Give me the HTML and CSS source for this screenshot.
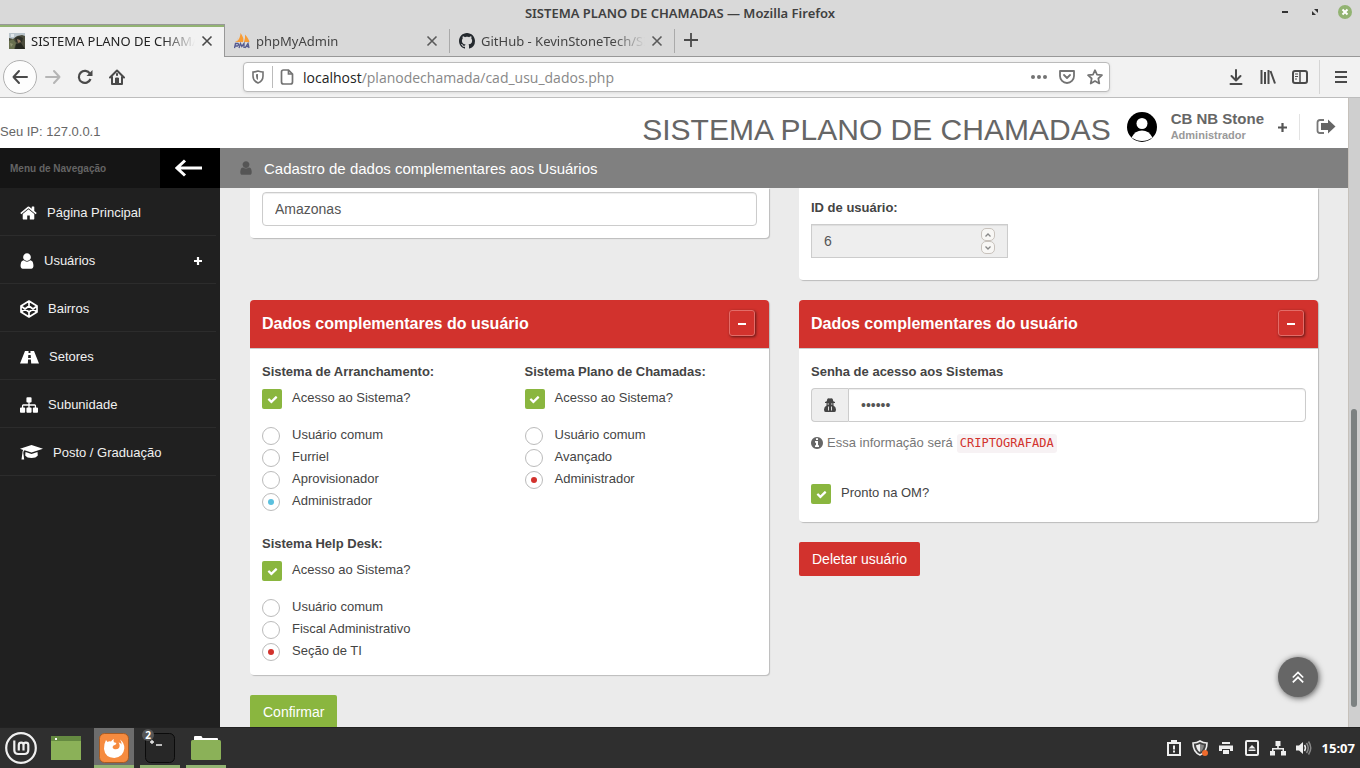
FILE: index.html
```html
<!DOCTYPE html>
<html lang="pt-BR">
<head>
<meta charset="utf-8">
<title>SISTEMA PLANO DE CHAMADAS</title>
<link rel="stylesheet" href="styles.css">
</head>
<body>
<div class="titlebar">
  <span class="titlebar-text">SISTEMA PLANO DE CHAMADAS — Mozilla Firefox</span>
  <div class="window-controls">
    <button class="plain" aria-label="Minimizar"><svg width="14" height="14" viewBox="0 0 14 14"><path d="M4 7h6" stroke="#333" stroke-width="2"/></svg></button>
    <button class="plain" aria-label="Restaurar"><svg width="14" height="14" viewBox="0 0 14 14"><path d="M6 4h4v4zM4 6v4h4z" fill="#333"/></svg></button>
    <button class="plain" aria-label="Fechar janela"><svg width="14" height="14" viewBox="0 0 14 14"><circle cx="7" cy="7" r="7" fill="#92b372"/><path d="M4.500 4.500l5 5M9.500 4.500l-5 5" stroke="#fff" stroke-width="2"/></svg></button>
  </div>
</div>

<div class="tabs">
  <div class="tab tab-active">
    <svg width="16" height="16" viewBox="0 0 16 16"><rect width="16" height="16" fill="#4b4c3c"/><path d="M0 0h16v3l-3-1-5 1-4 3-4-1z" fill="#b9c4cb"/><path d="M2 1h3v3H2z" fill="#e0e6e9"/><path d="M6 5l4-2 4 2-1 4-3 1-3-1z" fill="#2d2f26"/><path d="M8 6l3 1 1 2-3 1z" fill="#977961"/><path d="M0 8l4-2 3 4-2 6H0z" fill="#69704f"/><path d="M7 11l5-1 4 6H6z" fill="#25271f"/><path d="M1 10l3 1-2 3z" fill="#929472"/></svg>
    <span class="tab-label">SISTEMA PLANO DE CHAMADAS</span>
    <button class="plain" aria-label="Fechar aba"><svg width="12" height="12" viewBox="0 0 12 12"><path d="M1.500 1.500l9 9M10.500 1.500l-9 9" stroke="#4a4a4a" stroke-width="1.600"/></svg></button>
  </div>
  <div class="tab">
    <svg width="16" height="16" viewBox="0 0 16 16"><path d="M6.500 0q4 5 2.500 9H2.500q4-4 4-9zM11 1.500q4 4.500 4.500 7.500H10q1.500-4 1-7.500zM4 4.500Q4 8 1 9h2z" fill="#f89c35"/><path d="M.5 15l1-4.500h2.500q1.500 1-.5 2.500H1.500M5 15l1.500-4.500 1.300 3 2.200-3V15M11 15l3-4.500 1 4.500M12.500 13.500h2.500" fill="none" stroke="#555a90" stroke-width="1.300"/></svg>
    <span class="tab-label">phpMyAdmin</span>
    <button class="plain" aria-label="Fechar aba"><svg width="12" height="12" viewBox="0 0 12 12"><path d="M1.500 1.500l9 9M10.500 1.500l-9 9" stroke="#5a5a5a" stroke-width="1.600"/></svg></button>
  </div>
  <div class="tab">
    <svg width="16" height="16" viewBox="0 0 16 16"><path fill="#24292e" d="M8 0C3.580 0 0 3.580 0 8c0 3.540 2.290 6.530 5.470 7.590.4.070.55-.17.55-.38 0-.19-.01-.82-.01-1.490-2.010.37-2.530-.49-2.690-.94-.09-.23-.48-.94-.82-1.130-.28-.15-.68-.52-.01-.53.630-.01 1.080.58 1.230.82.720 1.210 1.870.87 2.330.66.070-.52.280-.87.510-1.070-1.780-.2-3.640-.89-3.640-3.950 0-.87.310-1.590.82-2.150-.08-.2-.36-1.020.08-2.120 0 0 .67-.21 2.200.82.640-.18 1.320-.27 2-.27s1.360.09 2 .27c1.530-1.040 2.200-.82 2.200-.82.440 1.100.160 1.920.080 2.120.51.560.82 1.270.82 2.150 0 3.070-1.870 3.750-3.650 3.950.29.250.54.730.54 1.480 0 1.070-.01 1.930-.01 2.200 0 .21.150.46.550.38A8.010 8.010 0 0 0 16 8c0-4.420-3.580-8-8-8z"/></svg>
    <span class="tab-label">GitHub - KevinStoneTech/SISTEMA</span>
    <button class="plain" aria-label="Fechar aba"><svg width="12" height="12" viewBox="0 0 12 12"><path d="M1.500 1.500l9 9M10.500 1.500l-9 9" stroke="#5a5a5a" stroke-width="1.600"/></svg></button>
  </div>
  <button class="plain new-tab" aria-label="Nova aba"><svg width="14" height="14" viewBox="0 0 14 14"><path d="M7 0v14M0 7h14" stroke="#4a4a4a" stroke-width="1.800"/></svg></button>
</div>

<div class="toolbar">
  <button class="plain back" aria-label="Voltar"><svg width="16" height="16" viewBox="0 0 16 16" fill="none" stroke="#4a4a4a" stroke-width="2" stroke-linecap="round" stroke-linejoin="round"><path d="M15 8H1.500M7 2L1.500 8 7 14"/></svg></button>
  <button class="plain nav-icon" aria-label="Avançar"><svg width="16" height="16" viewBox="0 0 16 16" fill="none" stroke="#b5b5b5" stroke-width="2" stroke-linecap="round" stroke-linejoin="round"><path d="M1 8h13.500M9 2l5.500 6L9 14"/></svg></button>
  <button class="plain nav-icon" aria-label="Recarregar"><svg width="16" height="16" viewBox="0 0 16 16"><path d="M13.500 10A6 6 0 1 1 13 4.800" fill="none" stroke="#4a4a4a" stroke-width="2.200"/><path d="M15.500 1v6H9.500z" fill="#4a4a4a"/></svg></button>
  <button class="plain nav-icon" aria-label="Página inicial"><svg width="16" height="16" viewBox="0 0 16 16"><path d="M1 8.500L8 1.500l7 7M3 7.500V15h10V7.500" fill="none" stroke="#4a4a4a" stroke-width="2" stroke-linejoin="round" stroke-linecap="round"/><path d="M6.500 14V9h3v5M7.500 4.500h1v2h-1z" stroke="#4a4a4a" fill="#4a4a4a"/></svg></button>
  <div class="spacer"></div>
  <div class="urlbar">
    <svg width="14" height="14" viewBox="0 0 14 14"><path d="M7 1q3 1 5 1v4q0 5-5 7-5-2-5-7V2q2 0 5-1z" fill="none" stroke="#737373" stroke-width="1.600"/><path d="M7 4v6q-2-1-2-4V4.300z" fill="#737373"/></svg>
    <span class="url-sep"></span>
    <svg width="14" height="16" viewBox="0 0 14 16"><path d="M1.500 3q0-2 2-2h5l4 4v8q0 2-2 2h-7q-2 0-2-2zM8.500 1v4h4" fill="none" stroke="#737373" stroke-width="1.700"/></svg>
    <div class="url"><span class="url-host">localhost</span>/planodechamada/cad_usu_dados.php</div>
    <div class="url-actions">
      <button class="plain" aria-label="Ações"><svg width="16" height="16" viewBox="0 0 16 16" fill="#737373"><circle cx="2" cy="8" r="2"/><circle cx="8" cy="8" r="2"/><circle cx="14" cy="8" r="2"/></svg></button>
      <button class="plain" aria-label="Pocket"><svg width="16" height="16" viewBox="0 0 16 16" fill="none" stroke="#737373" stroke-width="1.800" stroke-linecap="round"><path d="M1 2h14v5a7 7 0 0 1-14 0zM5 6l3 3 3-3" stroke-linejoin="round"/></svg></button>
      <button class="plain" aria-label="Favoritar"><svg width="16" height="16" viewBox="0 0 16 16"><path d="M8 1.200l2 4.500 5 .5-3.700 3.300 1 5L8 12l-4.300 2.500 1-5L1 6.200l5-.5z" fill="none" stroke="#737373" stroke-width="1.700" stroke-linejoin="round"/></svg></button>
    </div>
  </div>
  <div class="spacer"></div>
  <button class="plain nav-icon" aria-label="Downloads"><svg width="16" height="16" viewBox="0 0 16 16" fill="none" stroke="#4a4a4a" stroke-width="2" stroke-linecap="round" stroke-linejoin="round"><path d="M8 1v10M3.500 7L8 11.500 12.500 7M2.500 15h11"/></svg></button>
  <button class="plain nav-icon" aria-label="Biblioteca"><svg width="16" height="16" viewBox="0 0 16 16" stroke="#4a4a4a" stroke-width="2"><path d="M1.500 1v14M5 3v12M8.500 1v14M10.500 2l4.500 12.500"/></svg></button>
  <button class="plain nav-icon" aria-label="Painel lateral"><svg width="16" height="16" viewBox="0 0 16 16" fill="none" stroke="#4a4a4a"><rect x="1" y="2" width="14" height="12" rx="2" stroke-width="2"/><path d="M8 2v12" stroke-width="1.500"/><path d="M3 5h3M3 7.500h3M3 10h2"/></svg></button>
  <span class="toolbar-sep"></span>
  <button class="plain menu" aria-label="Menu"><svg width="14" height="14" viewBox="0 0 14 14"><path d="M1 2h12M1 7h12M1 12h12" stroke="#4a4a4a" stroke-width="2"/></svg></button>
</div>

<div class="viewport">
  <div class="page">
    <header class="page-header">
      <span class="ip">Seu IP: 127.0.0.1</span>
      <h1 class="brand">SISTEMA PLANO DE CHAMADAS</h1>
      <svg class="avatar" width="30" height="30" viewBox="0 0 30 30"><circle cx="15" cy="15" r="15" fill="#000"/><circle cx="15" cy="11.500" r="5.500" fill="#fff"/><path d="M4.500 25.500Q8 18.500 15 18.500t10.500 7Q20 29 15 29T4.500 25.500z" fill="#fff"/></svg>
      <div class="account"><strong class="account-name">CB NB Stone</strong><span class="account-role">Administrador</span></div>
      <button class="plain account-more" aria-label="Mais opções"><svg width="9" height="9" viewBox="0 0 9 9"><path d="M4.500 0v9M0 4.500h9" stroke="#555" stroke-width="2.200"/></svg></button>
      <a class="logout" href="#" aria-label="Sair"><svg width="20" height="18" viewBox="0 0 20 18"><path d="M8 2H4Q1.500 2 1.500 4.500v8Q1.500 15 4 15h4" fill="none" stroke="#777" stroke-width="1.800"/><path d="M5 5h7V1.500l7.500 7-7.500 7V12H5z" fill="#666"/></svg></a>
    </header>
    <div class="page-body">
      <nav class="sidebar">
        <div class="sidebar-head"><span class="sidebar-title">Menu de Navegação</span>
          <button class="plain collapse" aria-label="Recolher menu"><svg width="28" height="18" viewBox="0 0 28 18" fill="none" stroke="#fff" stroke-width="3"><path d="M2 9h25M10 1.500L2 9l8 7.500"/></svg></button>
        </div>
        <a class="nav-item" href="#"><svg width="17" height="18" viewBox="64 0 1664 1792"><path fill="#fff" d="M1472 992v480q0 26-19 45t-45 19h-384v-384h-256v384h-384q-26 0-45-19t-19-45v-480q0-1 .5-3t.5-3l575-474 575 474q1 2 1 6zm223-69l-62 74q-8 9-21 11h-3q-13 0-21-7l-692-577-692 577q-12 8-24 7-13-2-21-11l-62-74q-8-10-7-23.500t11-21.500l719-599q32-26 76-26t76 26l244 204v-195q0-14 9-23t23-9h192q14 0 23 9t9 23v408l219 182q10 8 11 21.500t-7 23.500z"/></svg>Página Principal</a>
        <a class="nav-item" href="#"><svg width="14" height="18" viewBox="256 0 1280 1792"><path fill="#fff" d="M1536 1399q0 109-62.500 187t-150.500 78h-854q-88 0-150.500-78t-62.500-187q0-85 8.500-160.500t31.500-152 58.500-131 94-89 134.500-34.500q131 128 313 128t313-128q76 0 134.500 34.500t94 89 58.500 131 31.500 152 8.500 160.500zm-256-887q0 159-112.500 271.500t-271.500 112.500-271.500-112.500-112.500-271.500 112.500-271.500 271.500-112.500 271.500 112.500 112.500 271.500z"/></svg>Usuários<svg class="nav-plus" width="8" height="8" viewBox="0 0 8 8"><path d="M4 0v8M0 4h8" stroke="#fff" stroke-width="2.200"/></svg></a>
        <a class="nav-item" href="#"><svg width="18" height="18" viewBox="0 0 18 18" fill="none" stroke="#fff" stroke-width="1.700" stroke-linejoin="round"><path d="M9 1l8 5v6l-8 5-8-5V6zM1 6l8 6 8-6M1 12l8-6 8 6M9 1v5M9 12v5"/></svg>Bairros</a>
        <a class="nav-item" href="#"><svg width="19" height="14" viewBox="0 0 19 14"><path fill="#fff" fill-rule="evenodd" d="M5 1h3.600l-.1 2h2l-.1-2H14l5 12.500h-7.800l-.3-4H8.100l-.3 4H0zM8.300 5l-.2 3h2.800l-.2-3z"/></svg>Setores</a>
        <a class="nav-item" href="#"><svg width="18" height="18" viewBox="0 0 1792 1792"><path fill="#fff" d="M1792 1248v320q0 40-28 68t-68 28h-320q-40 0-68-28t-28-68v-320q0-40 28-68t68-28h96v-192h-512v192h96q40 0 68 28t28 68v320q0 40-28 68t-68 28h-320q-40 0-68-28t-28-68v-320q0-40 28-68t68-28h96v-192h-512v192h96q40 0 68 28t28 68v320q0 40-28 68t-68 28h-320q-40 0-68-28t-28-68v-320q0-40 28-68t68-28h96v-192q0-52 38-90t90-38h512v-192h-96q-40 0-68-28t-28-68v-320q0-40 28-68t68-28h320q40 0 68 28t28 68v320q0 40-28 68t-68 28h-96v192h512q52 0 90 38t38 90v192h96q40 0 68 28t28 68z"/></svg>Subunidade</a>
        <a class="nav-item" href="#"><svg width="23" height="17" viewBox="0 0 23 17" fill="#fff"><path d="M11.500 1L23 4.800 11.500 8.600 4.500 6.300Q3.400 7 3.300 9l.9 6.500H1.500L2.400 9q0-2 .8-3.100L0 4.800z"/><path d="M5.500 8l6 2 6-2 .3 3.500Q16 14 11.500 14T5.200 11.500z"/></svg>Posto / Graduação</a>
      </nav>
      <div class="content">
        <div class="crumb"><svg width="12" height="16" viewBox="256 0 1280 1792"><path fill="#555" d="M1536 1399q0 109-62.500 187t-150.500 78h-854q-88 0-150.500-78t-62.500-187q0-85 8.500-160.500t31.500-152 58.500-131 94-89 134.500-34.500q131 128 313 128t313-128q76 0 134.500 34.500t94 89 58.500 131 31.500 152 8.500 160.500zm-256-887q0 159-112.500 271.500t-271.500 112.500-271.500-112.500-112.500-271.500 112.500-271.500 271.500-112.500 271.500 112.500 112.500 271.500z"/></svg>Cadastro de dados complementares aos Usuários</div>
        <main class="panels">
          <section class="card card-state"><input class="field" type="text" value="Amazonas" aria-label="Estado"></section>
          <section class="card card-id">
            <label class="label" for="uid">ID de usuário:</label>
            <div class="number">
              <input class="field field-number" id="uid" type="number" value="6" readonly>
              <div class="spin">
                <button class="spin-btn" aria-label="Aumentar"><svg width="8" height="6" viewBox="0 0 8 6"><path d="M1.500 4.500L4 2l2.500 2.500" fill="none" stroke="#888" stroke-width="1.300"/></svg></button>
                <button class="spin-btn" aria-label="Diminuir"><svg width="8" height="6" viewBox="0 0 8 6"><path d="M1.500 1.500L4 4l2.500-2.500" fill="none" stroke="#888" stroke-width="1.300"/></svg></button>
              </div>
            </div>
          </section>
          <div class="column">
            <section class="card">
              <div class="card-head"><h2 class="card-title">Dados complementares do usuário</h2><button class="toggle" aria-label="Recolher"><span class="minus"></span></button></div>
              <div class="card-body groups">
                <fieldset class="group">
                  <legend class="label">Sistema de Arranchamento:</legend>
                  <label class="option"><input class="check" type="checkbox" checked>Acesso ao Sistema?</label>
                  <div class="radios">
                    <label class="option"><input class="radio" type="radio" name="arr">Usuário comum</label>
                    <label class="option"><input class="radio" type="radio" name="arr">Furriel</label>
                    <label class="option"><input class="radio" type="radio" name="arr">Aprovisionador</label>
                    <label class="option"><input class="radio radio-blue" type="radio" name="arr" checked>Administrador</label>
                  </div>
                </fieldset>
                <fieldset class="group">
                  <legend class="label">Sistema Plano de Chamadas:</legend>
                  <label class="option"><input class="check" type="checkbox" checked>Acesso ao Sistema?</label>
                  <div class="radios">
                    <label class="option"><input class="radio" type="radio" name="spc">Usuário comum</label>
                    <label class="option"><input class="radio" type="radio" name="spc">Avançado</label>
                    <label class="option"><input class="radio" type="radio" name="spc" checked>Administrador</label>
                  </div>
                </fieldset>
                <fieldset class="group">
                  <legend class="label">Sistema Help Desk:</legend>
                  <label class="option"><input class="check" type="checkbox" checked>Acesso ao Sistema?</label>
                  <div class="radios">
                    <label class="option"><input class="radio" type="radio" name="hd">Usuário comum</label>
                    <label class="option"><input class="radio" type="radio" name="hd">Fiscal Administrativo</label>
                    <label class="option"><input class="radio" type="radio" name="hd" checked>Seção de TI</label>
                  </div>
                </fieldset>
              </div>
            </section>
            <button class="btn btn-green">Confirmar</button>
          </div>
          <div class="column">
            <section class="card">
              <div class="card-head"><h2 class="card-title">Dados complementares do usuário</h2><button class="toggle" aria-label="Recolher"><span class="minus"></span></button></div>
              <div class="card-body access">
                <label class="label" for="pwd">Senha de acesso aos Sistemas</label>
                <div class="input-group">
                  <span class="addon"><svg width="12" height="14" viewBox="0 0 12 14" fill="#444"><path d="M3.300 1Q4 0 6 .5 8 0 8.700 1l.6 2.300 1.700.7v1H9.500v2.500Q12 9 12 11.500q0 2.500-1.500 2.500h-9Q0 14 0 11.500 0 9 2.500 7.500V5H1V4l1.700-.7z"/><path d="M3.500 6H5M7 6h1.500M4.500 8.500v4M7.500 8.500v4" stroke="#eee" stroke-width=".9"/></svg></span>
                  <input class="field field-joined" id="pwd" type="password" value="123456">
                </div>
                <p class="hint"><svg width="12" height="12" viewBox="128 128 1536 1536"><path fill="#666" d="M1152 1376v-160q0-14-9-23t-23-9h-96v-512q0-14-9-23t-23-9h-320q-14 0-23 9t-9 23v160q0 14 9 23t23 9h96v320h-96q-14 0-23 9t-9 23v160q0 14 9 23t23 9h448q14 0 23-9t9-23zm-128-896v-160q0-14-9-23t-23-9h-192q-14 0-23 9t-9 23v160q0 14 9 23t23 9h192q14 0 23-9t9-23zm640 416q0 209-103 385.500t-279.500 279.500-385.500 103-385.500-103-279.500-279.500-103-385.500 103-385.500 279.500-279.500 385.500-103 385.500 103 279.500 279.500 103 385.500z"/></svg><span>Essa informação será</span><code class="code">CRIPTOGRAFADA</code></p>
                <label class="option"><input class="check" type="checkbox" checked>Pronto na OM?</label>
              </div>
            </section>
            <button class="btn btn-red">Deletar usuário</button>
          </div>
        </main>
        <button class="to-top" aria-label="Voltar ao topo"><svg width="12" height="12" viewBox="0 0 12 12" fill="none" stroke="#fff" stroke-width="1.700"><path d="M.8 6.500L6 1.500l5.200 5M.8 11.300L6 6.300l5.200 5"/></svg></button>
      </div>
    </div>
  </div>
  <div class="scroll-track"><div class="scroll-thumb"></div></div>
</div>

<div class="taskbar">
  <button class="plain task start" aria-label="Menu do sistema"><svg width="32" height="32" viewBox="0 0 32 32" fill="none" stroke="#f0f0f0"><circle cx="16" cy="16" r="14.800" stroke-width="2.200"/><path d="M9.300 8.500v9.500q0 4 4 4h6q4 0 4-4v-5q0-2.300-2.400-2.300T18.500 13v5.500M18.500 13q0-2.300-2.300-2.300T13.800 13v5.500" stroke-width="2.200"/></svg></button>
  <button class="plain task" aria-label="Mostrar área de trabalho"><svg width="30" height="24" viewBox="0 0 30 24"><rect width="30" height="24" fill="#8bb158"/><rect width="30" height="5" fill="#658a41"/><rect x="4" y="2" width="2" height="2" fill="#fff"/></svg></button>
  <div class="windows">
  <button class="plain task running focused" aria-label="Firefox"><svg width="30" height="30" viewBox="0 0 30 30"><rect x=".5" y=".5" width="29" height="29" rx="5" fill="#f68b3f" stroke="#a85b22"/><path d="M7 7l1.500 2Q10 8 12 8.500q1-2 3-2.500-1 2 0 3.200l2.500.8q-.5 2-3 2.500-2 2 .5 3.500 3 .8 5-1 1.500-3-.5-5.500 2 0 3 2 .3-2.500-1.500-5 4.500 3 4.300 9-.8 8.500-10 9.500Q6 24.500 5 16q-.2-5 2-9z" fill="#fff"/></svg></button>
  <button class="plain task running" aria-label="Terminal"><svg width="30" height="30" viewBox="0 0 30 30"><rect x=".5" y=".5" width="29" height="29" rx="5" fill="#272727" stroke="#0b0b0b"/><path d="M5 9h4M7 7v4M11 12h6" stroke="#eee" stroke-width="1.300"/></svg><span class="badge">2</span></button>
  <button class="plain task running" aria-label="Arquivos"><svg width="30" height="26" viewBox="0 0 30 26"><path d="M3 5V2q0-1 1-1h6q1 0 1.500 2H26q1 0 1 1v2H3z" fill="#fff"/><rect y="5" width="30" height="20" rx="1.500" fill="#8bb158"/></svg></button>
  </div>
  <div class="tray">
    <svg width="16" height="16" viewBox="0 0 16 16"><path d="M2 3h12v12H2z" fill="none" stroke="#eee" stroke-width="2"/><path d="M6 3V1h4v2M8 5.500v4M8 10.500v2" stroke="#eee" stroke-width="2" fill="none"/></svg>
    <svg width="16" height="16" viewBox="0 0 16 16"><path d="M8 1q3 2 7 2 0 9-7 12-7-3-7-12 4 0 7-2z" fill="#444" stroke="#eee" stroke-width="1.600"/><path d="M8 4q2 1 4 1.200Q11.500 10 8 12z" fill="#888"/><path d="M8 4Q6 5 4 5.200 4.500 10 8 12z" fill="#eee"/><circle cx="13" cy="13" r="3" fill="#ee6b2d"/></svg>
    <svg width="16" height="16" viewBox="0 0 16 16" fill="#eee"><path d="M4 2h8v2H4zM1 5.500h14V11h-3V9H4v2H1zM5 10h6v4H5z"/></svg>
    <svg width="16" height="16" viewBox="0 0 16 16"><rect x="2" y="1" width="12" height="14" rx="1" fill="none" stroke="#eee" stroke-width="2"/><path d="M8 5l3.500 3.500h-7zM4.500 9.500h7V11h-7z" fill="#eee"/></svg>
    <svg width="16" height="16" viewBox="0 0 16 16" fill="#eee"><path d="M5.500 1h5v5H8.800v2H14v3h2v4.500h-5V11h1.500V9.500h-9V11H5v4.500H0V11h2V8h5.200V6H5.500z"/></svg>
    <svg width="16" height="16" viewBox="0 0 16 16"><path d="M0 5.500h3L7 2v12l-4-3.500H0z" fill="#eee"/><path d="M8.500 5q2 3 0 6" stroke="#eee" fill="none" stroke-width="1.500"/><path d="M10.500 3q3.500 5 0 10M12.500 1.500q4.500 6.500 0 13" stroke="#888" fill="none" stroke-width="1.500"/></svg>
    <span class="clock">15:07</span>
  </div>
</div>
</body>
</html>
```
FILE: styles.css
```css
* { box-sizing: border-box; }
body {
  margin: 0;
  height: 100vh;
  display: flex;
  flex-direction: column;
  overflow: hidden;
  font-family: "Liberation Sans", Arial, sans-serif;
  font-size: 13px;
  color: #444;
}
svg { display: block; flex: none; }
button, input { font-family: inherit; }
a { color: inherit; text-decoration: none; }
.plain { border: 0; background: none; padding: 0; display: flex; align-items: center; justify-content: center; flex: none; }

/* Browser frame */
.titlebar, .tabs, .toolbar { font-family: "Noto Sans", sans-serif; flex: none; }
.titlebar { position: relative; height: 24px; background: #d9d9d9; display: flex; align-items: center; justify-content: center; }
.titlebar-text { font-size: 13px; font-weight: 600; color: #404040; padding-top: 2px; }
.window-controls { position: absolute; right: 8px; top: 5px; display: flex; gap: 16px; }

.tabs { height: 33px; display: flex; background: #d9d9d9; border-bottom: 1px solid #989898; }
.tab { width: 225px; height: 32px; display: flex; align-items: center; gap: 6px; padding: 2px 12px 0 9px; position: relative; color: #444; }
.tab:not(.tab-active)::after { content: ""; position: absolute; right: 0; top: 5px; height: 24px; width: 1px; background: #aaa; }
.tab-active { height: 33px; padding: 0 11px 0 9px; background: #f2f2f2; border-top: 1px solid #989898; border-right: 1px solid #989898; box-shadow: inset 0 2px #92b372; color: #222; }
.tab-label { flex: 1; font-size: 13px; white-space: nowrap; overflow: hidden; mask-image: linear-gradient(to right, #000 calc(100% - 32px), transparent); }
.new-tab { width: 32px; height: 32px; }

.toolbar { height: 41px; display: flex; align-items: center; padding: 0 12px 0 3px; background: #f2f2f2; border-bottom: 1px solid #bdbdbd; }
.back { width: 34px; height: 34px; border: 1px solid #b0b0b0; border-radius: 50%; background: #fdfdfd; }
.nav-icon { width: 32px; height: 32px; }
.spacer { flex: 0 1 110px; }
.urlbar { flex: 1; height: 30px; display: flex; align-items: center; gap: 7px; padding: 0 6px 0 7px; background: #fff; border: 1px solid #bbb; border-radius: 4px; box-shadow: 0 1px 3px #0000001a; }
.url-sep { width: 1px; height: 22px; background: #bbb; }
.url { flex: 1; font-family: "Open Sans", "Noto Sans", sans-serif; font-size: 14px; color: #888; padding-left: 2px; }
.url-host { color: #222; }
.url-actions { display: flex; gap: 12px; }
.toolbar-sep { width: 1px; height: 34px; margin-left: 3px; background: #d5d5d5; }
.menu { margin-left: 14px; }

/* Page */
.viewport { flex: 1; min-height: 0; display: flex; }
.page { flex: 1; min-width: 0; display: flex; flex-direction: column; background: #fff; }
.page-header { height: 50px; flex: none; display: flex; align-items: center; color: #666; padding-right: 12px; padding-top: 8px; }
.ip { padding-top: 8px; }
.brand { margin: 6px 16px 0 auto; font-size: 30px; line-height: 34px; font-weight: 400; }
.account { display: flex; flex-direction: column; margin: 0 14px; padding-bottom: 2px; }
.account-name { font-size: 15px; line-height: 18px; }
.account-role { font-size: 11px; line-height: 14px; font-weight: 700; color: #999; }
.logout { margin-left: 12px; padding: 4px 0 4px 16px; border-left: 1px solid #e3e3e3; }

.page-body { flex: 1; min-height: 0; display: flex; }
.sidebar { width: 220px; flex: none; background: #202020; color: #f0f0f0; }
.sidebar-head { height: 40px; display: flex; align-items: center; justify-content: space-between; background: #151515; }
.sidebar-title { padding-left: 10px; font-size: 10px; font-weight: 700; color: #646464; }
.collapse { width: 60px; height: 40px; padding-right: 2px; background: #000; }
.nav-item { height: 48px; margin-right: 4px; padding: 2px 14px 0 20px; display: flex; align-items: center; gap: 10px; border-bottom: 1px solid #2c2c2c; }
.nav-plus { margin-left: auto; }

.content { flex: 1; min-width: 0; position: relative; display: flex; flex-direction: column; background: #ebebeb; }
.crumb { height: 40px; flex: none; display: flex; align-items: center; gap: 12px; padding: 0 20px; background: #808080; color: #fff; font-size: 15px; }
.panels { flex: 1; min-height: 0; overflow: hidden; display: grid; grid-template-columns: 1fr 1fr; grid-template-rows: auto auto; gap: 20px 30px; align-items: start; align-content: start; padding: 0 30px; }
.card { background: #fff; border-radius: 4px; box-shadow: 1px 1px 1px #0003; }
.card-state { padding: 4px 12px 12px; border-radius: 0 0 4px 4px; }
.card-id { padding: 9px 12px 22px; border-radius: 0 0 4px 4px; }
.column { display: flex; flex-direction: column; align-items: flex-start; gap: 20px; }
.column .card { width: 100%; }
.card-head { height: 49px; display: flex; align-items: center; justify-content: space-between; padding: 0 14px 2px 12px; background: #d2322d; border-bottom: 1px solid #ccc; border-radius: 4px 4px 0 0; }
.card-title { margin: 0; padding-top: 2px; font-size: 16px; color: #fff; }
.toggle { width: 26px; height: 26px; padding: 2px 0 0; display: flex; align-items: center; justify-content: center; background: #d2322d; border: 1px solid #e36c68; border-radius: 3px; box-shadow: 1px 1px 3px #0008; }
.minus { width: 8px; height: 2px; background: #fff; }
.card-body { padding: 12px; }
.access { padding-bottom: 17px; }
.groups { display: grid; grid-template-columns: 1fr 1fr; gap: 20px 30px; }
.group { margin: 0; border: 0; padding: 0; min-width: 0; }
.label { display: block; padding: 0; margin-bottom: 5px; font-size: 13px; line-height: 22px; font-weight: 700; }
.option { display: flex; align-items: center; height: 22px; line-height: 20px; padding-bottom: 2px; }
.radios { margin-top: 15px; }
.check { appearance: none; flex: none; width: 20px; height: 20px; margin: 2px 10px 0 0; border-radius: 2px; background: #8ab63f url("data:image/svg+xml,%3Csvg xmlns='http://www.w3.org/2000/svg' viewBox='0 0 1792 1792'%3E%3Cpath fill='white' d='M1671 566q0 40-28 68l-724 724-136 136q-28 28-68 28t-68-28l-136-136-362-362q-28-28-28-68t28-68l136-136q28-28 68-28t68 28l294 295 656-657q28-28 68-28t68 28l136 136q28 28 28 68z'/%3E%3C/svg%3E") center / 11px no-repeat; }
.radio { appearance: none; flex: none; width: 18px; height: 18px; margin: 2px 12px 0 0; border: 1px solid #bbb; border-radius: 50%; background: #fff; display: flex; align-items: center; justify-content: center; }
.radio:checked::before { content: ""; width: 6px; height: 6px; border-radius: 50%; background: #d2322d; }
.radio-blue:checked::before { background: #5bc0de; }
.field { display: block; width: 100%; height: 34px; padding: 0 12px; border: 1px solid #ccc; border-radius: 4px; background: #fff; box-shadow: inset 0 1px 1px #00000013; color: #555; font-size: 14px; }
.number { position: relative; width: 197px; }
.field-number { background: #eee; border-radius: 0; appearance: textfield; }
.field-number::-webkit-inner-spin-button { appearance: none; }
.spin { position: absolute; right: 13px; top: 4px; display: flex; flex-direction: column; }
.spin-btn { width: 14px; height: 13px; padding: 0; display: flex; align-items: center; justify-content: center; border: 1px solid #c8c2bc; border-radius: 5px; background: #f8f7f5; }
.input-group { display: flex; }
.addon { width: 37px; flex: none; display: flex; align-items: center; justify-content: center; background: #eee; border: 1px solid #ccc; border-right: 0; border-radius: 4px 0 0 4px; }
.field-joined { flex: 1; min-width: 0; border-radius: 0 4px 4px 0; }
.hint { display: flex; align-items: center; gap: 4px; margin: 10px 0 29px; line-height: 22px; color: #777; }
.code { padding: 0 3px; line-height: 19px; font-family: "DejaVu Sans Mono", monospace; font-size: 12px; color: #d2322d; background: #f7f2f4; border-radius: 3px; }
.btn { height: 34px; flex: none; padding: 0 13px; border: 0; border-radius: 2px; color: #fff; font-size: 14px; }
.btn-green { background: #8ab63f; }
.btn-red { background: #d2322d; }
.to-top { position: absolute; right: 30px; bottom: 30px; width: 40px; height: 40px; padding: 0; display: flex; align-items: center; justify-content: center; border: 0; border-radius: 50%; background: #666; box-shadow: 1px 1px 6px #000a; }

.scroll-track { width: 12px; flex: none; display: flex; flex-direction: column; align-items: center; justify-content: flex-end; padding: 0 1px 20px 0; background: #cfcfcf; border-left: 1px solid #c6c1bb; }
.scroll-thumb { width: 6px; height: 49%; border-radius: 3px; background: #7c8181; }

/* Desktop panel */
.taskbar { height: 41px; flex: none; display: flex; background: #2f2f2f; border-top: 1px solid #222; }
.task { width: 40px; height: 40px; position: relative; }
.start { margin: 0 5px 0 1px; }
.windows { display: flex; gap: 6px; margin-left: 8px; }
.running { box-shadow: inset 0 -3px #92b372; }
.focused { background: #6d6d6d; }
.badge { position: absolute; left: 2px; top: 1px; width: 12px; height: 12px; border-radius: 50%; background: #555; color: #fff; font: bold 10px/12px "Noto Sans", sans-serif; text-align: center; }
.tray { margin-left: auto; padding-right: 5px; display: flex; align-items: center; gap: 10px; }
.clock { font: bold 13px/20px "Noto Sans", sans-serif; color: #fff; }
```
